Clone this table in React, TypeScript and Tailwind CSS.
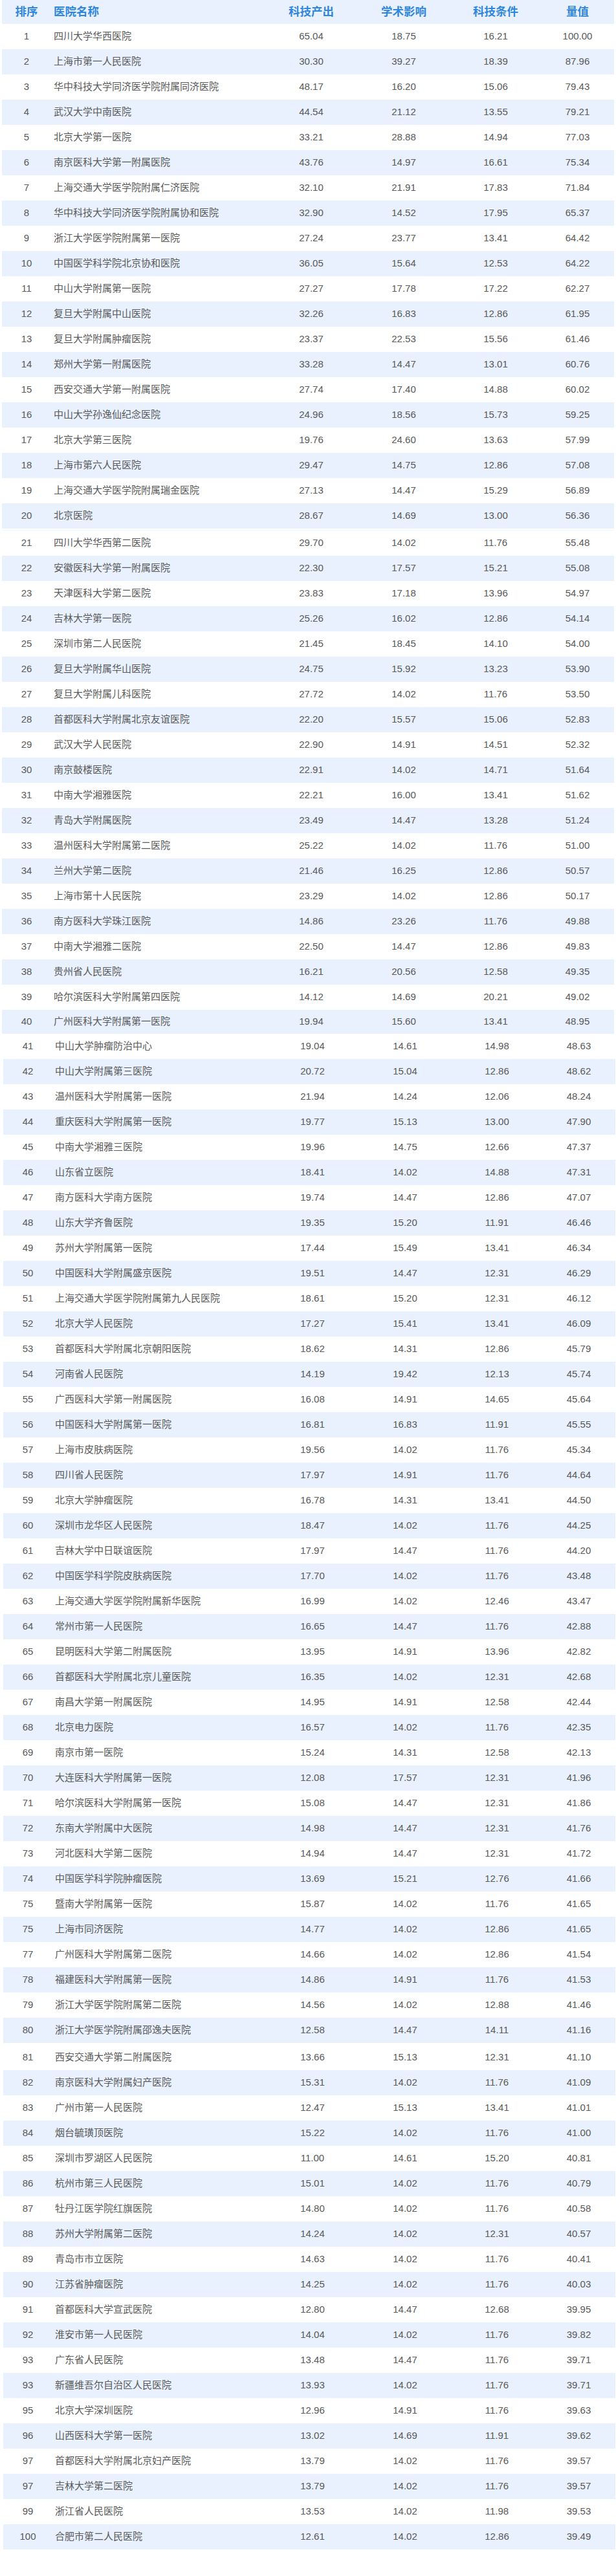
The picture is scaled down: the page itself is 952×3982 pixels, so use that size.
import React from 'react';

type Row = [string, string, string, string, string, string];

const rows: Row[] = [
  ['1', '四川大学华西医院', '65.04', '18.75', '16.21', '100.00'],
  ['2', '上海市第一人民医院', '30.30', '39.27', '18.39', '87.96'],
  ['3', '华中科技大学同济医学院附属同济医院', '48.17', '16.20', '15.06', '79.43'],
  ['4', '武汉大学中南医院', '44.54', '21.12', '13.55', '79.21'],
  ['5', '北京大学第一医院', '33.21', '28.88', '14.94', '77.03'],
  ['6', '南京医科大学第一附属医院', '43.76', '14.97', '16.61', '75.34'],
  ['7', '上海交通大学医学院附属仁济医院', '32.10', '21.91', '17.83', '71.84'],
  ['8', '华中科技大学同济医学院附属协和医院', '32.90', '14.52', '17.95', '65.37'],
  ['9', '浙江大学医学院附属第一医院', '27.24', '23.77', '13.41', '64.42'],
  ['10', '中国医学科学院北京协和医院', '36.05', '15.64', '12.53', '64.22'],
  ['11', '中山大学附属第一医院', '27.27', '17.78', '17.22', '62.27'],
  ['12', '复旦大学附属中山医院', '32.26', '16.83', '12.86', '61.95'],
  ['13', '复旦大学附属肿瘤医院', '23.37', '22.53', '15.56', '61.46'],
  ['14', '郑州大学第一附属医院', '33.28', '14.47', '13.01', '60.76'],
  ['15', '西安交通大学第一附属医院', '27.74', '17.40', '14.88', '60.02'],
  ['16', '中山大学孙逸仙纪念医院', '24.96', '18.56', '15.73', '59.25'],
  ['17', '北京大学第三医院', '19.76', '24.60', '13.63', '57.99'],
  ['18', '上海市第六人民医院', '29.47', '14.75', '12.86', '57.08'],
  ['19', '上海交通大学医学院附属瑞金医院', '27.13', '14.47', '15.29', '56.89'],
  ['20', '北京医院', '28.67', '14.69', '13.00', '56.36'],
  ['21', '四川大学华西第二医院', '29.70', '14.02', '11.76', '55.48'],
  ['22', '安徽医科大学第一附属医院', '22.30', '17.57', '15.21', '55.08'],
  ['23', '天津医科大学第二医院', '23.83', '17.18', '13.96', '54.97'],
  ['24', '吉林大学第一医院', '25.26', '16.02', '12.86', '54.14'],
  ['25', '深圳市第二人民医院', '21.45', '18.45', '14.10', '54.00'],
  ['26', '复旦大学附属华山医院', '24.75', '15.92', '13.23', '53.90'],
  ['27', '复旦大学附属儿科医院', '27.72', '14.02', '11.76', '53.50'],
  ['28', '首都医科大学附属北京友谊医院', '22.20', '15.57', '15.06', '52.83'],
  ['29', '武汉大学人民医院', '22.90', '14.91', '14.51', '52.32'],
  ['30', '南京鼓楼医院', '22.91', '14.02', '14.71', '51.64'],
  ['31', '中南大学湘雅医院', '22.21', '16.00', '13.41', '51.62'],
  ['32', '青岛大学附属医院', '23.49', '14.47', '13.28', '51.24'],
  ['33', '温州医科大学附属第二医院', '25.22', '14.02', '11.76', '51.00'],
  ['34', '兰州大学第二医院', '21.46', '16.25', '12.86', '50.57'],
  ['35', '上海市第十人民医院', '23.29', '14.02', '12.86', '50.17'],
  ['36', '南方医科大学珠江医院', '14.86', '23.26', '11.76', '49.88'],
  ['37', '中南大学湘雅二医院', '22.50', '14.47', '12.86', '49.83'],
  ['38', '贵州省人民医院', '16.21', '20.56', '12.58', '49.35'],
  ['39', '哈尔滨医科大学附属第四医院', '14.12', '14.69', '20.21', '49.02'],
  ['40', '广州医科大学附属第一医院', '19.94', '15.60', '13.41', '48.95'],
  ['41', '中山大学肿瘤防治中心', '19.04', '14.61', '14.98', '48.63'],
  ['42', '中山大学附属第三医院', '20.72', '15.04', '12.86', '48.62'],
  ['43', '温州医科大学附属第一医院', '21.94', '14.24', '12.06', '48.24'],
  ['44', '重庆医科大学附属第一医院', '19.77', '15.13', '13.00', '47.90'],
  ['45', '中南大学湘雅三医院', '19.96', '14.75', '12.66', '47.37'],
  ['46', '山东省立医院', '18.41', '14.02', '14.88', '47.31'],
  ['47', '南方医科大学南方医院', '19.74', '14.47', '12.86', '47.07'],
  ['48', '山东大学齐鲁医院', '19.35', '15.20', '11.91', '46.46'],
  ['49', '苏州大学附属第一医院', '17.44', '15.49', '13.41', '46.34'],
  ['50', '中国医科大学附属盛京医院', '19.51', '14.47', '12.31', '46.29'],
  ['51', '上海交通大学医学院附属第九人民医院', '18.61', '15.20', '12.31', '46.12'],
  ['52', '北京大学人民医院', '17.27', '15.41', '13.41', '46.09'],
  ['53', '首都医科大学附属北京朝阳医院', '18.62', '14.31', '12.86', '45.79'],
  ['54', '河南省人民医院', '14.19', '19.42', '12.13', '45.74'],
  ['55', '广西医科大学第一附属医院', '16.08', '14.91', '14.65', '45.64'],
  ['56', '中国医科大学附属第一医院', '16.81', '16.83', '11.91', '45.55'],
  ['57', '上海市皮肤病医院', '19.56', '14.02', '11.76', '45.34'],
  ['58', '四川省人民医院', '17.97', '14.91', '11.76', '44.64'],
  ['59', '北京大学肿瘤医院', '16.78', '14.31', '13.41', '44.50'],
  ['60', '深圳市龙华区人民医院', '18.47', '14.02', '11.76', '44.25'],
  ['61', '吉林大学中日联谊医院', '17.97', '14.47', '11.76', '44.20'],
  ['62', '中国医学科学院皮肤病医院', '17.70', '14.02', '11.76', '43.48'],
  ['63', '上海交通大学医学院附属新华医院', '16.99', '14.02', '12.46', '43.47'],
  ['64', '常州市第一人民医院', '16.65', '14.47', '11.76', '42.88'],
  ['65', '昆明医科大学第二附属医院', '13.95', '14.91', '13.96', '42.82'],
  ['66', '首都医科大学附属北京儿童医院', '16.35', '14.02', '12.31', '42.68'],
  ['67', '南昌大学第一附属医院', '14.95', '14.91', '12.58', '42.44'],
  ['68', '北京电力医院', '16.57', '14.02', '11.76', '42.35'],
  ['69', '南京市第一医院', '15.24', '14.31', '12.58', '42.13'],
  ['70', '大连医科大学附属第一医院', '12.08', '17.57', '12.31', '41.96'],
  ['71', '哈尔滨医科大学附属第一医院', '15.08', '14.47', '12.31', '41.86'],
  ['72', '东南大学附属中大医院', '14.98', '14.47', '12.31', '41.76'],
  ['73', '河北医科大学第二医院', '14.94', '14.47', '12.31', '41.72'],
  ['74', '中国医学科学院肿瘤医院', '13.69', '15.21', '12.76', '41.66'],
  ['75', '暨南大学附属第一医院', '15.87', '14.02', '11.76', '41.65'],
  ['75', '上海市同济医院', '14.77', '14.02', '12.86', '41.65'],
  ['77', '广州医科大学附属第二医院', '14.66', '14.02', '12.86', '41.54'],
  ['78', '福建医科大学附属第一医院', '14.86', '14.91', '11.76', '41.53'],
  ['79', '浙江大学医学院附属第二医院', '14.56', '14.02', '12.88', '41.46'],
  ['80', '浙江大学医学院附属邵逸夫医院', '12.58', '14.47', '14.11', '41.16'],
  ['81', '西安交通大学第二附属医院', '13.66', '15.13', '12.31', '41.10'],
  ['82', '南京医科大学附属妇产医院', '15.31', '14.02', '11.76', '41.09'],
  ['83', '广州市第一人民医院', '12.47', '15.13', '13.41', '41.01'],
  ['84', '烟台毓璜顶医院', '15.22', '14.02', '11.76', '41.00'],
  ['85', '深圳市罗湖区人民医院', '11.00', '14.61', '15.20', '40.81'],
  ['86', '杭州市第三人民医院', '15.01', '14.02', '11.76', '40.79'],
  ['87', '牡丹江医学院红旗医院', '14.80', '14.02', '11.76', '40.58'],
  ['88', '苏州大学附属第二医院', '14.24', '14.02', '12.31', '40.57'],
  ['89', '青岛市市立医院', '14.63', '14.02', '11.76', '40.41'],
  ['90', '江苏省肿瘤医院', '14.25', '14.02', '11.76', '40.03'],
  ['91', '首都医科大学宣武医院', '12.80', '14.47', '12.68', '39.95'],
  ['92', '淮安市第一人民医院', '14.04', '14.02', '11.76', '39.82'],
  ['93', '广东省人民医院', '13.48', '14.47', '11.76', '39.71'],
  ['93', '新疆维吾尔自治区人民医院', '13.93', '14.02', '11.76', '39.71'],
  ['95', '北京大学深圳医院', '12.96', '14.91', '11.76', '39.63'],
  ['96', '山西医科大学第一医院', '13.02', '14.69', '11.91', '39.62'],
  ['97', '首都医科大学附属北京妇产医院', '13.79', '14.02', '11.76', '39.57'],
  ['97', '吉林大学第二医院', '13.79', '14.02', '11.76', '39.57'],
  ['99', '浙江省人民医院', '13.53', '14.02', '11.98', '39.53'],
  ['100', '合肥市第二人民医院', '12.61', '14.02', '12.86', '39.49'],
];

const cols = 'grid grid-cols-[76px_331px_142px_144px_140px_113px] items-center';

function TableRow({ row, index, short }: { row: Row; index: number; short?: boolean }) {
  const striped = index % 2 === 1;
  return (
    <div
      className={`${cols} ${short ? 'h-[37px]' : 'h-[39px]'} ${striped ? 'bg-[#e8f1fd]' : 'bg-white'} text-[15px] text-[#595959]`}
    >
      <div className="text-center">{row[0]}</div>
      <div className="pl-[4px] whitespace-nowrap">{row[1]}</div>
      <div className="text-center">{row[2]}</div>
      <div className="text-center">{row[3]}</div>
      <div className="text-center">{row[4]}</div>
      <div className="text-center">{row[5]}</div>
    </div>
  );
}

export default function App() {
  const first = rows.slice(0, 20);
  const second = rows.slice(20, 40);
  const third = rows.slice(40, 80);
  const fourth = rows.slice(80);

  return (
    <div
      className="w-[952px] min-h-[3982px] bg-white"
      style={{ fontFamily: '"Liberation Sans", "Noto Sans CJK SC", sans-serif' }}
    >
      <div className="w-[946px] ml-[3px]">
        {/* Header */}
        <div className={`${cols} h-[37px] bg-[#e8f1fd] text-[17.5px] font-bold text-[#2f86dc]`}>
          <div className="text-center">排序</div>
          <div className="pl-[4px]">医院名称</div>
          <div className="text-center">科技产出</div>
          <div className="text-center">学术影响</div>
          <div className="text-center">科技条件</div>
          <div className="text-center">量值</div>
        </div>

        {first.map((r, i) => (
          <TableRow key={`a${i}`} row={r} index={i} />
        ))}

        <div className="h-[3px] border-b border-[#eef5fe]" />

        {second.map((r, i) => (
          <TableRow key={`b${i}`} row={r} index={i} short={i === second.length - 1} />
        ))}
      </div>

      <div className="w-[946px] ml-[5px]">
        {third.map((r, i) => (
          <TableRow key={`c${i}`} row={r} index={i} />
        ))}

        <div className="h-[3px]" />

        {fourth.map((r, i) => (
          <TableRow key={`d${i}`} row={r} index={i} />
        ))}
      </div>
    </div>
  );
}
